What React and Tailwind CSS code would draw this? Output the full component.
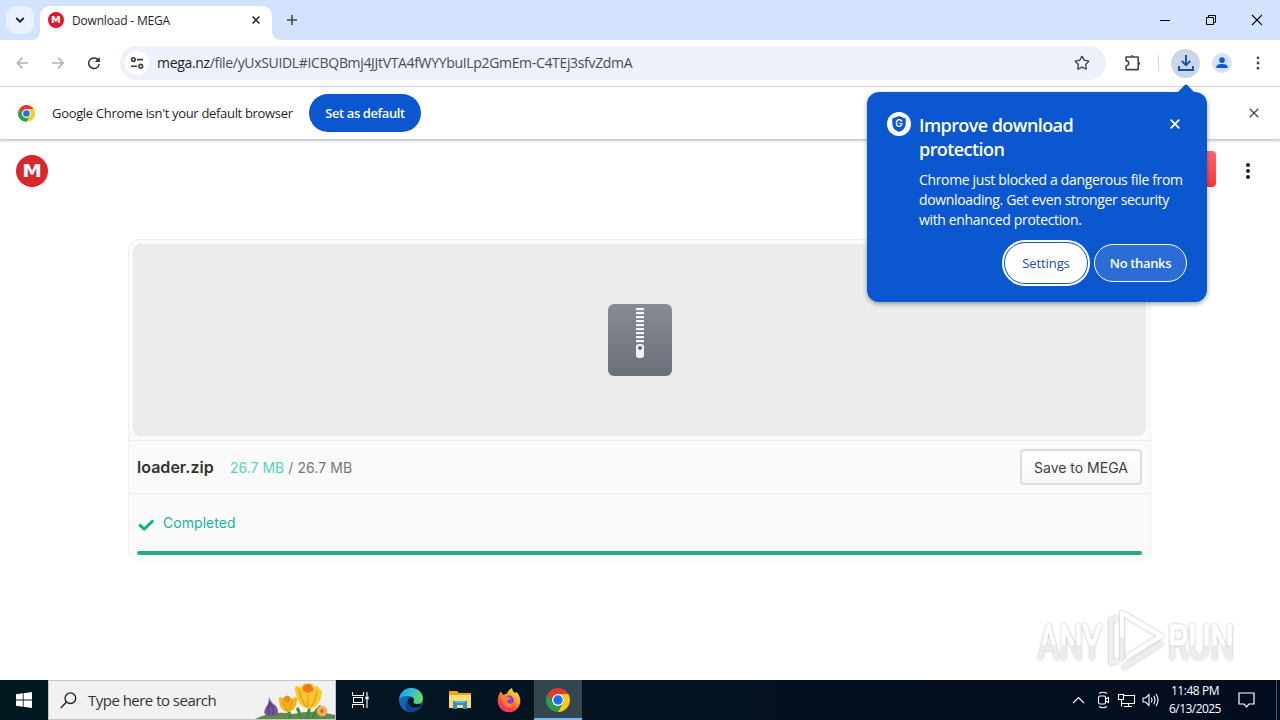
import React from "react";
import { Star } from "lucide-react";

const ui = "font-['Open_Sans','Noto_Sans',sans-serif]";

function ChromeLogo({ size }) {
  return (
    <svg width={size} height={size} viewBox="0 0 24 24">
      <path fill="#e33b2e" d="M12 6H22.39A12 12 0 0 0 1.61 6L6.8 15A6 6 0 0 1 12 6Z" />
      <path fill="#2a9d49" d="M1.61 6L6.8 15A6 6 0 0 0 17.2 15L12 24A12 12 0 0 1 1.61 6Z" />
      <path fill="#fdc913" d="M12 6H22.39A12 12 0 0 1 12 24L17.2 15A6 6 0 0 0 12 6Z" />
      <circle cx="12" cy="12" r="6" fill="#fff" />
      <circle cx="12" cy="12" r="4.7" fill="#1a73e8" />
    </svg>
  );
}

function MegaLogo({ size, color }) {
  return (
    <svg width={size} height={size} viewBox="0 0 32 32" className="shrink-0">
      <circle cx="16" cy="16" r="16" fill={color} />
      <text
        x="6.2"
        y="22"
        textLength="19.6"
        lengthAdjust="spacingAndGlyphs"
        fill="#fff"
        className="font-['DejaVu_Sans',sans-serif] text-[17px] font-bold"
      >
        M
      </text>
    </svg>
  );
}

function Cross({ size, color, width = 1.5 }) {
  return (
    <svg width={size} height={size} viewBox="0 0 10 10" stroke={color} strokeWidth={width}>
      <path d="M0.7 0.7L9.3 9.3M9.3 0.7L0.7 9.3" />
    </svg>
  );
}

// ================= BROWSER =================
function TabStrip() {
  return (
    <div className="flex h-10 shrink-0 bg-[#d3e3fd]">
      <div className="ml-1.5 mt-1.5 flex h-7 w-7 items-center justify-center rounded-[10px] bg-[#e9f1fe]">
        <svg width="10" height="8" viewBox="0 0 10 8" fill="none" stroke="#1f1f1f" strokeWidth="1.8">
          <path d="M1.3 2L5 5.7L8.7 2" />
        </svg>
      </div>
      <div className="flex w-[6px] items-end">
        <svg width="6" height="10" viewBox="0 0 6 10" fill="#fff">
          <path d="M6 0V10H0Q6 8 6 0Z" />
        </svg>
      </div>
      <div className="mt-1.5 flex w-[232px] items-center rounded-t-[10px] bg-white pb-[6px] pl-2 pr-[12px]">
        <MegaLogo size={16} color="#e3152b" />
        <span className={`${ui} ml-2 mt-px whitespace-nowrap text-[12px] tracking-[-0.18px] text-[#1f1f1f]`}>
          Download - MEGA
        </span>
        <div className="ml-auto">
          <Cross size={8} color="#1f1f1f" width={1.8} />
        </div>
      </div>
      <div className="flex w-2 items-end">
        <svg width="8" height="10" viewBox="0 0 8 10" fill="#fff">
          <path d="M0 0V10H8Q0 9 0 0Z" />
        </svg>
      </div>
      <svg className="ml-[6px] mt-[14px]" width="12" height="12" viewBox="0 0 12 12" stroke="#474747" strokeWidth="1.6">
        <path d="M6 1V11M1 6H11" />
      </svg>
      <div className="ml-auto mr-[18px] flex items-center">
        <svg width="103" height="12" viewBox="0 0 103 12" fill="none" stroke="#000">
          <path d="M1 6.5H11" />
          <path d="M47.5 3.5H54.5V10.5H47.5ZM49.5 3V1.5H56.5V8.5H55" />
          <path d="M93 1L103 11M103 1L93 11" strokeWidth="1.1" />
        </svg>
      </div>
    </div>
  );
}

function Toolbar() {
  return (
    <div className="flex h-[47px] shrink-0 items-center border-b border-[#dfe3ea] bg-white">
      <svg className="ml-4" width="86" height="14" viewBox="0 0 86 14" fill="none" stroke="#b3b3b3" strokeWidth="1.6">
        <path d="M12 7H1.5M6.5 1.6L1.3 7L6.5 12.4" />
        <path d="M36 7H47M42 1.6L47.2 7L42 12.4" />
        <path d="M82.2 4A5.3 5.3 0 1 0 83.2 8" stroke="#333" strokeWidth="1.5" />
        <path d="M83.8 1V6H78.8Z" fill="#333" stroke="none" />
      </svg>
      <div className="ml-[18px] flex h-[34px] w-[986px] items-center rounded-full bg-[#edf1fa] pl-[5px]">
        <div className="flex h-6 w-6 items-center justify-center rounded-full bg-white">
          <svg width="14" height="14" viewBox="0 0 14 14" fill="none" stroke="#3c3c3c" strokeWidth="1.6">
            <circle cx="3.4" cy="3.6" r="1.8" />
            <path d="M7 3.6H13M1 10.2H7" />
            <circle cx="10.8" cy="10.2" r="1.8" />
          </svg>
        </div>
        <span className={`${ui} mb-px ml-2 whitespace-nowrap text-[14px] tracking-[-0.33px] text-[#4a4d52]`}>
          <span className="text-[#1f1f1f]">mega.nz</span>/file/yUxSUIDL#ICBQBmj4JJtVTA4fWYYbuILp2GmEm-C4TEj3sfvZdmA
        </span>
        <Star className="ml-auto mr-4" size={16} strokeWidth={2.1} color="#474747" />
      </div>
      <svg className="ml-[18px]" width="18" height="18" viewBox="0 0 18 18" fill="none" stroke="#474747" strokeWidth="1.6">
        <path d="M2 3H14.2V15.6H2V12Q4.8 11.6 4.8 9.3Q4.8 7 2 6.6Z" strokeLinejoin="round" />
        <path d="M6.2 2.6A2 2 0 0 1 10 2.6ZM14.8 7.4A2 2 0 0 1 14.8 11.2Z" fill="#474747" stroke="none" />
      </svg>
      <div className="ml-4 h-4 w-px bg-[#c9d7f0]" />
      <div className="ml-3 flex h-[29px] w-[29px] items-center justify-center rounded-full bg-[#cbd7e9]">
        <svg width="18" height="18" viewBox="0 0 18 18" fill="none" stroke="#17509f" strokeWidth="1.9">
          <path d="M9 1V11M4.8 7L9 11.2L13.2 7M2 12V16H16V12" />
        </svg>
      </div>
      <div className="ml-[12px] flex h-[20px] w-[20px] items-center justify-center rounded-full bg-[#d3e3fd]">
        <svg width="12" height="12" viewBox="0 0 13 13" fill="#0b57d0">
          <circle cx="6.5" cy="3.4" r="3" />
          <path d="M0.5 12V10.4Q0.5 7.6 6.5 7.6Q12.5 7.6 12.5 10.4V12Z" />
        </svg>
      </div>
      <svg className="ml-[23px]" width="6" height="14" viewBox="0 0 6 14" fill="#474747">
        <circle cx="3" cy="1.8" r="1.4" />
        <circle cx="3" cy="7" r="1.4" />
        <circle cx="3" cy="12.2" r="1.4" />
      </svg>
    </div>
  );
}

function InfoBar() {
  return (
    <div className="relative flex h-[52px] shrink-0 items-center bg-white shadow-[0_1px_2px_1px_rgba(0,0,0,0.22)]">
      <div className="ml-[17.5px]">
        <ChromeLogo size={17} />
      </div>
      <span className={`${ui} ml-[17.5px] mt-0.5 w-[257px] whitespace-nowrap text-[13px] tracking-[-0.32px] text-[#1f1f1f]`}>
        Google Chrome isn't your default browser
      </span>
      <button className={`${ui} h-[38px] w-[112px] whitespace-nowrap rounded-full bg-[#0b57d0] pt-0.5 text-[13px] font-semibold tracking-[-0.42px] text-white`}>
        Set as default
      </button>
      <div className="ml-auto mr-[21px]">
        <Cross size={10} color="#474747" width={1.3} />
      </div>
    </div>
  );
}

function ProtectionPopup() {
  return (
    <div className={`${ui} absolute left-[867px] top-[92px] h-[210px] w-[340px] rounded-xl bg-[#0b57d0] text-white shadow-[0_2px_5px_rgba(0,0,0,0.35)]`}>
      <svg className="absolute right-[12px] top-[-8px]" width="18" height="9" viewBox="0 0 18 9" fill="#0b57d0">
        <path d="M0 9L8 0.8Q9 0 10 0.8L18 9Z" />
      </svg>
      <div className="flex px-5 pt-5">
        <svg width="24" height="24" viewBox="0 0 24 24" className="shrink-0">
          <circle cx="12" cy="12" r="12" fill="#fff" />
          <path d="M12 4L18.7 6.5V11.5Q18.7 17.3 12 20Q5.3 17.3 5.3 11.5V6.5Z" fill="#0b57d0" />
          <text x="12" y="15.4" textAnchor="middle" fill="#fff" className="font-['Inter',sans-serif] text-[10px] font-semibold">
            G
          </text>
        </svg>
        <div className="ml-2 flex-1">
          <div className="flex">
            <h2 className="mt-px w-[240px] text-[18px] font-semibold leading-6 tracking-[-0.57px]">
              Improve download
              <br />
              protection
            </h2>
            <div className="ml-[11px] mt-[7px]">
              <Cross size={10} color="#fff" width={1.8} />
            </div>
          </div>
          <p className="mt-[9px] whitespace-nowrap text-[14px] leading-5 tracking-[-0.35px]">
            Chrome just blocked a dangerous file from
            <br />
            downloading. Get even stronger security
            <br />
            with enhanced protection.
          </p>
        </div>
      </div>
      <div className="mt-[10px] flex items-center justify-end gap-1 pr-5">
        <div className="rounded-full border-2 border-white p-px">
          <button className="block h-10 w-[82px] rounded-full bg-white pt-0.5 text-[13px] font-medium tracking-[-0.1px] text-[#1b4f9f]">
            Settings
          </button>
        </div>
        <button className="h-[38px] w-[93px] whitespace-nowrap rounded-full border border-white bg-[#2a6dd6] pt-0.5 text-[13px] font-semibold tracking-[-0.35px]">
          No thanks
        </button>
      </div>
    </div>
  );
}

// ================= MEGA PAGE =================
function ZipIcon() {
  const teeth = [4, 8, 12, 16, 20, 24, 28, 32, 36];
  return (
    <svg width="64" height="72" viewBox="0 0 64 72">
      <defs>
        <linearGradient id="zip" x1="0" y1="0" x2="0" y2="1">
          <stop offset="0" stopColor="#878b94" />
          <stop offset="1" stopColor="#6b6f79" />
        </linearGradient>
      </defs>
      <rect width="64" height="72" rx="6" fill="url(#zip)" />
      {teeth.map((y) => (
        <rect key={y} x="28" y={y} width="8" height="2.2" fill="#f3f4f5" />
      ))}
      <rect x="28" y="40" width="8" height="14" rx="3" fill="#f1f2f4" />
      <circle cx="32" cy="44" r="2" fill="#666d6c" />
    </svg>
  );
}

function Page() {
  return (
    <div className="flex-1 bg-white pt-[10px]">
      <header className="flex h-[40px] items-start pl-4">
        <div className="mt-1.5">
          <MegaLogo size={32} color="#d9272e" />
        </div>
        <div className="ml-auto mt-0.5 h-9 w-[110px] rounded bg-gradient-to-b from-[#ff646b] to-[#ff333a]" />
        <svg className="ml-[29px] mr-[29px] mt-[13px]" width="6" height="18" viewBox="0 0 6 18" fill="#222">
          <circle cx="3" cy="3" r="2" />
          <circle cx="3" cy="9" r="2" />
          <circle cx="3" cy="15" r="2" />
        </svg>
      </header>
      <main className="ml-32 mt-[50px] h-[322px] w-[1023px] rounded-[10px] border border-b-0 border-[#f0f0f0] bg-[#fafafa] font-['Inter',sans-serif]">
        <div className="m-1 flex h-48 items-center justify-center rounded-lg bg-[#ececec] pl-px">
          <ZipIcon />
        </div>
        <div className="flex h-[54px] items-center border-y border-[#eeeeee] px-2">
          <span className="w-[93px] whitespace-nowrap text-[16px] font-semibold tracking-[0.03px] text-[#303233]">loader.zip</span>
          <span className="whitespace-pre text-[14px] tracking-[0.07px] text-[#777]">
            <span className="tracking-normal text-[#55d2bd]">26.7 MB</span> / 26.7 MB
          </span>
          <button className="ml-auto h-9 w-[122px] whitespace-nowrap rounded border-2 border-[#dddddd] bg-gradient-to-b from-white to-[#f7f7f7] text-[14px] text-[#404040]">
            Save to MEGA
          </button>
        </div>
        <div className="flex h-[57px] items-center px-2 text-[14px] tracking-[0.05px] text-[#1bb298]">
          <svg className="mt-1" width="18" height="14" viewBox="0 0 18 14" fill="none" stroke="#12b08e" strokeWidth="3" strokeLinecap="round" strokeLinejoin="round">
            <path d="M3.2 7.4L7.2 11.2L15.3 3.4" />
          </svg>
          <span className="ml-2">Completed</span>
        </div>
        <div className="mx-2 h-1 rounded-full bg-[#2aaa81]" />
      </main>
    </div>
  );
}

function Watermark() {
  const letters = "font-['Roboto',sans-serif] text-[48px]";
  return (
    <svg className="absolute left-[1030px] top-[603px]" width="248" height="76" viewBox="0 0 248 76">
      <defs>
        <linearGradient id="half" x1="0" y1="0" x2="0" y2="1">
          <stop offset="0.55" stopColor="#fff" />
          <stop offset="0.55" stopColor="#ececec" />
        </linearGradient>
        <filter id="soft" x="-10%" y="-10%" width="120%" height="120%">
          <feDropShadow dx="0" dy="0" stdDeviation="1.8" floodColor="#000" floodOpacity="0.32" />
        </filter>
      </defs>
      <g filter="url(#soft)">
        <text x="8" y="56" textLength="64" lengthAdjust="spacingAndGlyphs" fill="url(#half)" stroke="url(#half)" className={letters}>
          ANY
        </text>
        <text x="138" y="56" textLength="66" lengthAdjust="spacingAndGlyphs" fill="url(#half)" stroke="url(#half)" className={letters}>
          RUN
        </text>
        <g fill="none" strokeWidth="4" strokeLinejoin="round">
          <path d="M88 58L81 60V17L87 15" stroke="#f0f0f0" />
          <path d="M92 47V10L131 33L97 54" stroke="#fff" />
          <path d="M92 34V57M132 40L93 65" stroke="#ededed" />
          <path d="M92 34V10L131 33" stroke="#fff" />
        </g>
      </g>
    </svg>
  );
}

// ================= TASKBAR =================
function Flowers() {
  return (
    <svg width="80" height="38" viewBox="0 0 80 38">
      <path d="M0 38Q18 29 38 33Q60 28 80 34V38Z" fill="#628a4b" />
      <path d="M35 38Q35 31 32 28M52 38Q55 27 55 20M45 38Q45 31 42 27M58 38Q58 32 66 25" fill="none" stroke="#438b3c" strokeWidth="3" />
      <path d="M14 16Q16 22 21 25Q27 35 16 35Q6 35 11 26Q14 23 14 16Z" fill="#75569b" />
      <path d="M15 21Q12 27 14 34M16 23Q20 28 18 34" fill="none" stroke="#493471" />
      <path d="M24 17Q26 15 29 18Q31 13 34 15L37 18Q41 15 42 17Q42 30 33 31Q24 30 24 17Z" fill="#f5b51c" />
      <path d="M28 18Q30 14 33 15Q37 17 35 20L32 22Z" fill="#f08a20" />
      <path d="M28 20L32 30M38 19L34 29" stroke="#dc901a" />
      <path d="M40 6Q43 4 46 7Q48 1 52 3Q56 0 59 6Q64 4 64 8L67 10Q66 26 54 28Q42 25 41 13Q39 9 40 6Z" fill="#fbc62b" />
      <path d="M48 6Q51 1 56 4Q59 7 58 10L53 12L48 10Z" fill="#ef761f" />
      <path d="M44 9Q47 22 52 26M62 10Q61 20 56 26M53 14V26" fill="none" stroke="#e99a1b" strokeWidth="1.3" />
      <circle cx="67" cy="30" r="5.3" fill="#f6ae57" />
      <circle cx="67" cy="30" r="2" fill="#e06b20" />
    </svg>
  );
}

function EdgeIcon() {
  return (
    <svg width="24" height="24" viewBox="0 0 24 24">
      <defs>
        <linearGradient id="edgeTop" x1="0" y1="0" x2="1" y2="0.3">
          <stop offset="0" stopColor="#2493dc" />
          <stop offset="0.55" stopColor="#30bfd2" />
          <stop offset="1" stopColor="#67d862" />
        </linearGradient>
      </defs>
      <circle cx="12" cy="12" r="12" fill="#1267b9" />
      <path d="M0.2 11C1 4.5 6 0 12 0C19 0 24 5 24 10.5C24 14 21.3 16 18 16C15.5 16 14 15 14.4 14C16 12.6 14.8 8.5 10 8C5 7.5 1 9.5 0.2 11Z" fill="url(#edgeTop)" />
      <path d="M8.6 13C8.6 18 12.5 21 17 20.5C19.5 20.2 21.5 19 22.6 17.5C20 23 14 25.3 8.5 23.2C6 19.5 5.5 14.5 9.5 10C8.9 11 8.6 12 8.6 13Z" fill="#0d438c" />
      <path d="M14.4 14C16 12.6 14.8 8.5 10.6 9.5C7.6 12 8.5 17.5 13 19.4C16.5 20.5 20.5 19.4 22.5 16.9C22 15.3 20 16 18 16C15.5 16 14 15 14.4 14Z" fill="#031923" />
    </svg>
  );
}

function FirefoxIcon() {
  return (
    <svg width="24" height="24" viewBox="0 0 24 24">
      <defs>
        <linearGradient id="fox" x1="0.8" y1="0" x2="0.2" y2="1">
          <stop offset="0" stopColor="#fff044" />
          <stop offset="0.4" stopColor="#ff9a25" />
          <stop offset="0.7" stopColor="#ff4140" />
          <stop offset="1" stopColor="#e72a87" />
        </linearGradient>
      </defs>
      <path d="M4 3.5L6 7L10 5.5Q11.5 1.5 15 0Q15 3 18 5L19.5 4Q23.3 8 23.3 13A11.3 11.3 0 0 1 0.7 13Q0.7 7 4 3.5Z" fill="url(#fox)" />
      <circle cx="12" cy="12.5" r="5" fill="#8443dc" />
      <path d="M4.5 8Q8 7 11.5 9L14 10.5L11 12Q9 13 11 15Q14 16.8 17 14Q16 20 10.5 19.5Q5 18 4.5 8Z" fill="#ff812f" />
    </svg>
  );
}

function Taskbar() {
  return (
    <div className={`${ui} flex h-10 shrink-0 items-center bg-gradient-to-r from-[#031922] to-[#030c1e]`}>
      <div className="flex h-10 w-12 items-center justify-center">
        <svg width="16" height="16" viewBox="0 0 16 16" fill="#fff">
          <path d="M0 2.3L6.8 1.3V7.6H0ZM7.6 1.2L16 0V7.6H7.6ZM0 8.4H6.8V14.7L0 13.7ZM7.6 8.4H16V16L7.6 14.8Z" />
        </svg>
      </div>
      <div className="flex h-10 w-72 items-center border border-[#c3c5c6] bg-[#f1f1f1] pl-[11px]">
        <svg width="17" height="17" viewBox="0 0 17 17" fill="none" stroke="#1c1c1c" strokeWidth="1.3">
          <circle cx="10.4" cy="6.2" r="5.3" />
          <path d="M6.5 10L0.7 16" />
        </svg>
        <span className="ml-[11px] whitespace-nowrap text-[15px] tracking-[-0.52px] text-[#333]">Type here to search</span>
        <div className="ml-auto">
          <Flowers />
        </div>
      </div>
      <svg className="ml-4" width="17" height="16" viewBox="0 0 17 16" fill="none" stroke="#fff" strokeWidth="1.1">
        <path d="M0.5 3.5H11.5M0.5 0V3.5M11.5 0V3.5M1.5 5.5H10.5V10.5H1.5ZM0.5 16V12.5H11.5V16M15 0V4M15 8V16" />
        <rect x="14" y="5" width="2" height="2" fill="#fff" />
      </svg>
      <div className="ml-[30px]">
        <EdgeIcon />
      </div>
      <svg className="ml-[26px]" width="22" height="20" viewBox="0 0 22 20">
        <path d="M0 1H8L10 3H22V18H0Z" fill="#e8a91b" />
        <path d="M0 5H22V18H0Z" fill="#ffdc72" />
        <path d="M4 11H18V19H14V15H8V19H4Z" fill="#2b8ed2" />
        <path d="M6 11H16V13H6Z" fill="#59b4e8" />
      </svg>
      <div className="ml-[26px]">
        <FirefoxIcon />
      </div>
      <div className="ml-[13px] flex h-10 w-12 items-center justify-center border-b-2 border-[#76b9ed] bg-[#354650] pt-0.5">
        <ChromeLogo size={24} />
      </div>
      <svg className="ml-auto" width="88" height="18" viewBox="0 0 88 18" fill="none" stroke="#fff" strokeWidth="1.1">
        <path d="M1 12L6.5 6.5L12 12" />
        <rect x="26.5" y="5" width="7" height="8" rx="1.5" />
        <path d="M33.5 8L36.5 6.5V11.5L33.5 10M27 2.5Q31 0 35 2.5M27 15.5Q31 18 35 15.5" />
        <path d="M51.5 4.5H62.5V12.5H50M56.5 12.5V15.5M52 15.5H60M46.5 3.5H51.5V8.5H46.5ZM49.5 8.5V15.5" />
        <path d="M71 7H73.5L77 3.5V14.5L73.5 11H71ZM79.2 6.5Q80.8 9 79.2 11.5M81.7 4.8Q84.2 9 81.7 13.2M84 3Q88 9 84 15" />
      </svg>
      <div className="ml-[5px] w-[60px] whitespace-nowrap text-center text-[12px] leading-[18px] text-white">
        <div className="tracking-[-0.45px]">11:48 PM</div>
        <div className="tracking-[-0.55px]">6/13/2025</div>
      </div>
      <svg className="ml-[13px] mr-[21px]" width="17" height="16" viewBox="0 0 17 16" fill="none" stroke="#fff" strokeWidth="1.2">
        <path d="M1 1H16V12H11L8.5 14.8L6 12H1Z" />
      </svg>
      <div className="mr-[3px] h-10 w-px bg-[#4c5563]" />
    </div>
  );
}

export default function App() {
  return (
    <div className="relative flex h-[720px] w-[1280px] flex-col overflow-hidden bg-white">
      <TabStrip />
      <Toolbar />
      <InfoBar />
      <Page />
      <Taskbar />
      <Watermark />
      <ProtectionPopup />
    </div>
  );
}
